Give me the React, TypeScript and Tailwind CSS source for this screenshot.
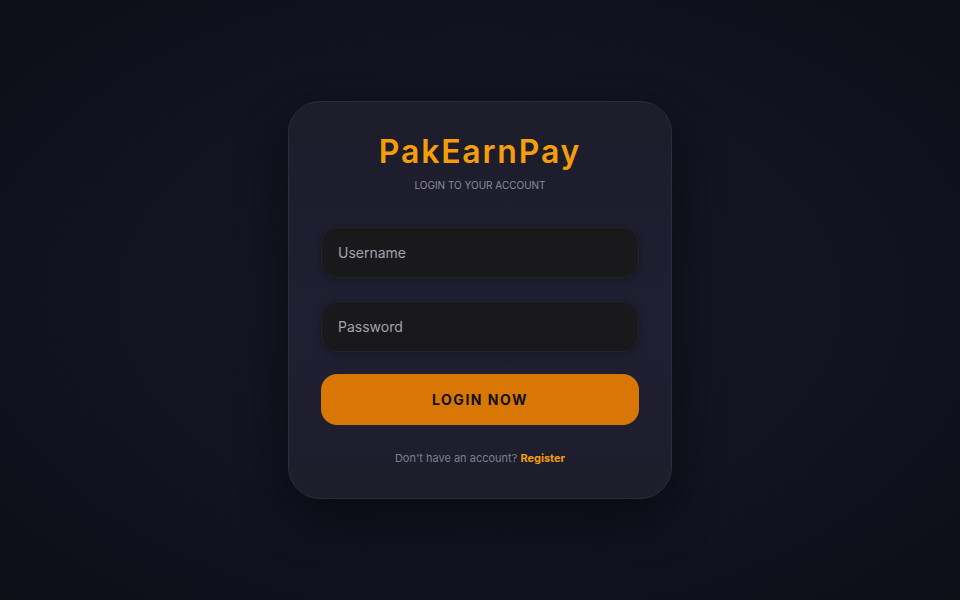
export default function App() {
  return (
    <div
      className="flex h-[600px] w-full items-center justify-center bg-[radial-gradient(ellipse_at_center,#171725_0%,#121220_60%,#0e0e17_100%)]"
      style={{ fontFamily: "Inter, 'Liberation Sans', sans-serif" }}
    >
      {/* Login card */}
      <div className="w-[384px] rounded-[32px] border border-[#2c2c3e] bg-[linear-gradient(180deg,#1c1c2a_0%,#1f1f33_55%,#1d1d2b_100%)] px-[32px] pt-[32px] pb-[33px] shadow-[0_20px_50px_rgba(0,0,0,0.45)]">
        <div className="text-center">
          <h1 className="text-[32px] font-semibold leading-[36px] tracking-[1.8px] text-[#f59e0b]">
            PakEarnPay
          </h1>
          <p className="mt-[9px] text-[10px] uppercase leading-[12px] text-[#8a8c9e]">
            Login to your account
          </p>
        </div>

        <div className="mt-[36px] flex flex-col gap-[22.5px]">
          <input
            type="text"
            placeholder="Username"
            className="h-[51px] w-full rounded-[16px] border border-[#232328] bg-[#19191c] px-[16px] text-[14px] text-[#e5e5e5] placeholder-[#a3a3ab] shadow-[0_2px_8px_rgba(0,0,0,0.3)] outline-none"
          />
          <input
            type="password"
            placeholder="Password"
            className="h-[51px] w-full rounded-[16px] border border-[#232328] bg-[#19191c] px-[16px] text-[14px] text-[#e5e5e5] placeholder-[#a3a3ab] shadow-[0_2px_8px_rgba(0,0,0,0.3)] outline-none"
          />
          <button className="h-[51px] w-full rounded-[16px] bg-[#d97706] text-[14px] font-bold tracking-[1.5px] text-[#111111]">
            LOGIN NOW
          </button>
        </div>

        <p className="mt-[26px] text-center text-[11px] leading-[14px] text-[#7d7f92]">
          Don&apos;t have an account?{" "}
          <span className="font-bold text-[#f59e0b]">Register</span>
        </p>
      </div>
    </div>
  );
}
